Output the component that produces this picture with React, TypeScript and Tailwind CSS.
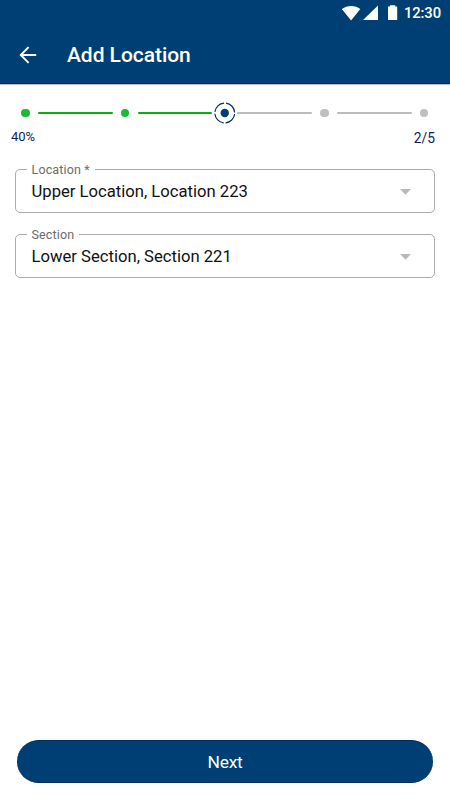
import React from 'react';

interface SelectFieldProps {
  label: string;
  value: string;
  className?: string;
}

type StepState = 'done' | 'current' | 'todo';

const steps: StepState[] = ['done', 'done', 'current', 'todo', 'todo'];

const StatusBar: React.FC = () => (
  <div className="h-[25px] flex items-center justify-end pr-[9px] text-white">
    <svg width="56" height="16" viewBox="342 5 56 16" fill="currentColor" className="mr-[6px]">
      <path d="M341.9 9.1C346.8 4.8 355.4 4.8 360.3 9.1L351.1 20.4Z" />
      <path d="M378 5.6V20H363Z" />
      <path d="M388 6.4H389.9V5.2H395.2V6.4H397.2V20H388Z" />
    </svg>
    <span className="relative top-[0.5px] text-[14.8px] font-medium leading-none tracking-[-0.1px]">12:30</span>
  </div>
);

const StepDot: React.FC<{ state: StepState }> = ({ state }) => (
  <div className="w-[25px] h-[25px] flex items-center justify-center shrink-0">
    {state === 'current' ? (
      <svg width="25" height="25" viewBox="0 0 25 25" fill="none">
        <circle cx="12.75" cy="12" r="9.9" stroke="#0a2c68" strokeWidth="1.2" strokeDasharray="13.55 2" strokeDashoffset="-1" />
        <circle cx="12.75" cy="12" r="4.2" fill="#003f73" />
      </svg>
    ) : (
      <div className={`w-[8.4px] h-[8.4px] rounded-full ${state === 'done' ? 'bg-[#1bb934]' : 'bg-[#bfbfbf]'}`} />
    )}
  </div>
);

const Stepper: React.FC = () => (
  <div className="pl-[13px] pr-[13.5px] pt-[16.5px] flex items-center">
    {steps.map((state, i) => (
      <React.Fragment key={i}>
        {i > 0 && (
          <div className={`h-[2.4px] flex-1 rounded-full ${i < 3 ? 'bg-[#0bae0b]' : 'bg-[#bcbcbc]'}`} />
        )}
        <StepDot state={state} />
      </React.Fragment>
    ))}
  </div>
);

const SelectField: React.FC<SelectFieldProps> = ({ label, value, className = '' }) => (
  <fieldset className={`h-[51px] rounded-[5px] border border-[#ababab] pl-[10.5px] ${className}`}>
    <legend className="px-[5px] h-[16px] text-[12.5px] leading-[16px] tracking-[0.15px] text-[#6c6c6c]">{label}</legend>
    <div className="flex items-center justify-between pl-[5px] pr-[23px] h-[28px]">
      <span className="text-[16.65px] leading-[28px] text-[#111]">{value}</span>
      <svg width="11" height="6" viewBox="0 0 11 6" fill="#b9b9b9">
        <path d="M0 0H11L5.5 5.8Z" />
      </svg>
    </div>
  </fieldset>
);

export default function App() {
  return (
    <div className="h-[800px] w-[450px] flex flex-col bg-white font-['Roboto',sans-serif]">
      <header className="h-[84px] bg-[#003f73] border-b border-[#00245c] shadow-[0_1px_1px_rgba(0,0,0,0.25)]">
        <StatusBar />
        <div className="h-[60px] pl-[19px] flex items-center text-white">
          <button aria-label="Back" className="w-[18px] h-[18px]">
            <svg width="18" height="18" viewBox="0 0 18 18" fill="none" stroke="currentColor" strokeWidth="1.9">
              <path d="M17.2 9H2M9.6 1.2L1.8 9L9.6 16.8" />
            </svg>
          </button>
          <h1 className="ml-[30px] text-[21px] leading-none font-medium tracking-[-0.05px]">Add Location</h1>
        </div>
      </header>

      <Stepper />
      <div className="flex justify-between pl-[11px] pr-[15px] h-[24px] leading-[24px] text-[#0b1f5c]">
        <span className="text-[13px] leading-[22px]">40%</span>
        <span className="text-[13.8px] leading-[25px]">2/5</span>
      </div>

      <main className="flex-1 px-[15px] pt-[12px]">
        <SelectField label="Location *" value="Upper Location, Location 223" />
        <SelectField label="Section" value="Lower Section, Section 221" className="mt-[14px]" />
      </main>

      <footer className="pl-[17px] pr-[17px] pb-[17px]">
        <button className="w-full h-[43px] rounded-full bg-[#003f73] border-y border-[#002a60] text-white text-[17.4px] leading-none tracking-[-0.2px] pt-[2px]">
          Next
        </button>
      </footer>
    </div>
  );
}
